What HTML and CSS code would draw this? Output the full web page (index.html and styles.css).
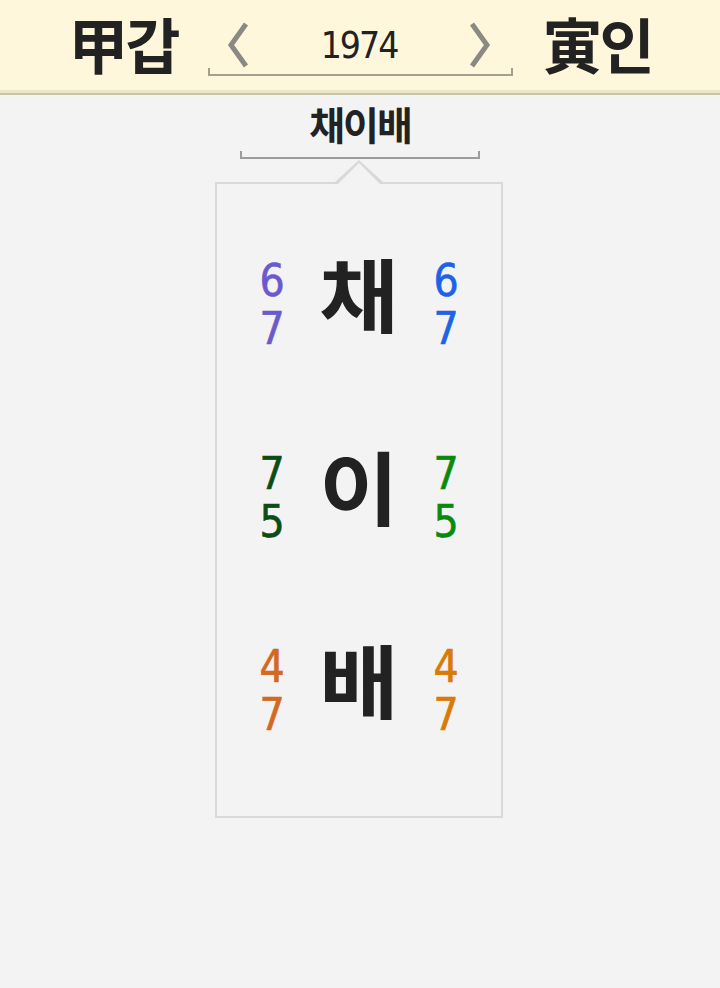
FILE: index.html
```html
<!DOCTYPE html>
<html lang="ko">
<head>
<meta charset="utf-8">
<link rel="stylesheet" href="styles.css">
</head>
<body>
<header class="top">
  <div class="pillar">甲갑</div>
  <div class="nav">
    <svg class="chev" width="30" height="46" viewBox="0 0 30 46"><polyline points="24,2 9,23 24,44" fill="none" stroke="#8a8a82" stroke-width="5"/></svg>
    <div class="year">1974</div>
    <svg class="chev" width="30" height="46" viewBox="0 0 30 46"><polyline points="6,2 21,23 6,44" fill="none" stroke="#8a8a82" stroke-width="5"/></svg>
  </div>
  <div class="pillar">寅인</div>
</header>
<main class="main">
  <div class="name">채이배</div>
  <div class="bracket"></div>
  <section class="card">
    <div class="row">
      <div class="nums"><span class="c-slate">6</span><span class="c-slate">7</span></div>
      <div class="big">채</div>
      <div class="nums"><span class="c-blue">6</span><span class="c-blue">7</span></div>
    </div>
    <div class="row">
      <div class="nums"><span class="c-dgreen">7</span><span class="c-dgreen">5</span></div>
      <div class="big">이</div>
      <div class="nums"><span class="c-green">7</span><span class="c-green">5</span></div>
    </div>
    <div class="row">
      <div class="nums"><span class="c-choc">4</span><span class="c-choc">7</span></div>
      <div class="big">배</div>
      <div class="nums"><span class="c-orange">4</span><span class="c-orange">7</span></div>
    </div>
  </section>
</main>
</body>
</html>
```
FILE: styles.css
```css
html, body {
  margin: 0;
  padding: 0;
}
body {
  background: #f3f3f3;
  font-family: "Noto Sans CJK KR", "Noto Sans", sans-serif;
  color: #222;
  width: 720px;
  height: 988px;
  overflow: hidden;
}
.top {
  height: 90px;
  background: #fff7dc;
  border-bottom: 3px solid #ebe5cb;
  box-shadow: 0 2px 0 #c9c3a8;
  display: flex;
  justify-content: center;
  align-items: center;
  gap: 30px;
}
.pillar {
  font-size: 60px;
  font-weight: 700;
  line-height: 1;
  letter-spacing: -3px;
  color: #222;
  margin-top: -4px;
}
.nav {
  position: relative;
  width: 305px;
  height: 60px;
  margin-top: 2px;
  border-bottom: 2px solid #a3a18e;
  display: flex;
  align-items: center;
  justify-content: space-between;
  padding: 0 16px 0 14px;
  box-sizing: border-box;
}
.nav::before, .nav::after {
  content: "";
  position: absolute;
  bottom: -2px;
  width: 2px;
  height: 8px;
  background: #a3a18e;
}
.nav::before { left: 0; }
.nav::after { right: 0; }
.chev {
  display: block;
  margin-top: 0;
}
.year {
  font-family: "DejaVu Sans Condensed", "DejaVu Sans", sans-serif;
  font-size: 37px;
  line-height: 40px;
  letter-spacing: -2px;
  margin-top: 2px;
  color: #222;
}
.main {
  display: flex;
  flex-direction: column;
  align-items: center;
  padding-top: 4px;
}
.name {
  font-size: 39px;
  font-weight: 700;
  line-height: 52px;
  color: #222;
  letter-spacing: -2px;
}
.bracket {
  width: 236px;
  height: 6px;
  border: 2px solid #9c9c9c;
  border-top: none;
  margin-top: 2px;
}
.card {
  position: relative;
  width: 284px;
  height: 622px;
  margin-top: 23px;
  border: 2px solid #d9d9d9;
  padding-top: 10px;
  box-sizing: content-box;
  margin-left: -2px;
}
.card::before {
  content: "";
  position: absolute;
  left: 118px;
  top: -24px;
  border-left: 24px solid transparent;
  border-right: 24px solid transparent;
  border-bottom: 22px solid #d9d9d9;
}
.card::after {
  content: "";
  position: absolute;
  left: 120px;
  top: -21px;
  border-left: 22px solid transparent;
  border-right: 22px solid transparent;
  border-bottom: 22px solid #f3f3f3;
}
.row {
  height: 193px;
  display: flex;
  align-items: center;
  justify-content: center;
  gap: 34px;
}
.nums {
  display: flex;
  flex-direction: column;
  align-items: center;
  width: 26px;
  font-family: "DejaVu Sans Condensed", "DejaVu Sans", sans-serif;
  font-size: 44px;
  line-height: 48px;
  margin-top: 28px;
  -webkit-text-stroke: 0.6px currentColor;
}
.big {
  font-size: 80px;
  font-weight: 700;
  line-height: 1;
  color: #222;
  width: 80px;
  text-align: center;
  transform: scaleX(1.08);
}
.c-slate { color: #6a5acd; }
.c-blue { color: #1d63e6; }
.c-dgreen { color: #0d4d15; }
.c-green { color: #0a8a0a; }
.c-choc { color: #d2691e; }
.c-orange { color: #d97a06; }
```
